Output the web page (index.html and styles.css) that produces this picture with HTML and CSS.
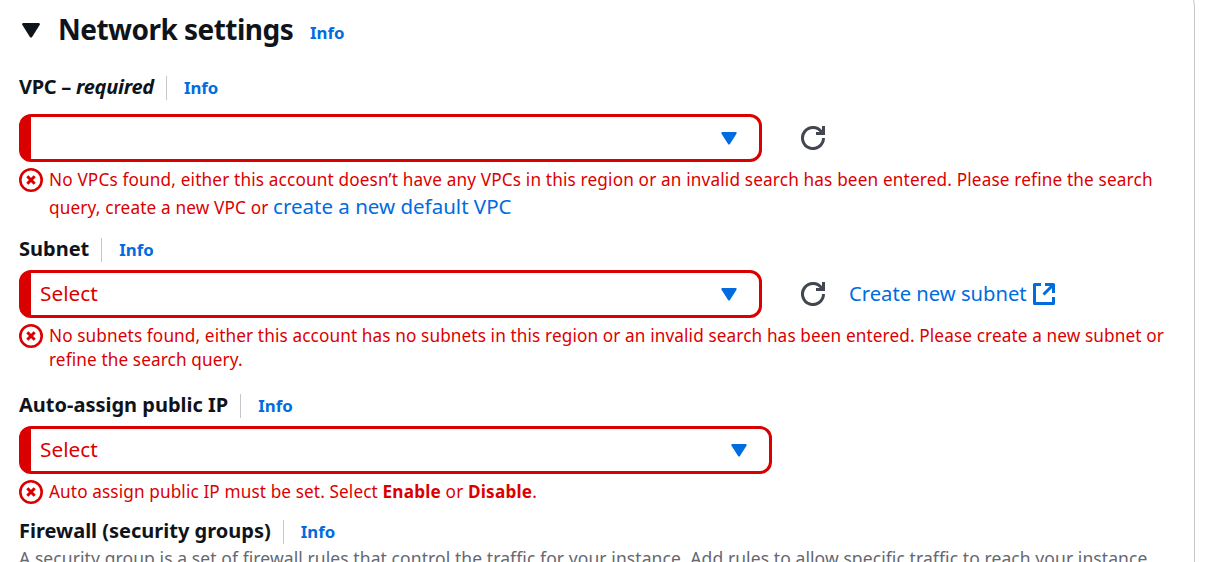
FILE: index.html
```
<!DOCTYPE html>
<html lang="en">
<head>
<meta charset="utf-8">
<title>Network settings</title>
<link rel="stylesheet" href="styles.css">
</head>
<body>
<svg class="sprite" aria-hidden="true">
  <symbol id="caret" viewBox="0 0 18 15"><path d="M1.500 0h15c1.200 0 1.800 1.200 1.100 2.100L10.100 13.900c-.5.8-1.700.8-2.200 0L.4 2.100C-.3 1.200.3 0 1.500 0z"/></symbol>
  <symbol id="error" viewBox="0 0 24 24"><circle cx="12" cy="12" r="10.700" fill="none" stroke="currentColor" stroke-width="2.600"/><path d="M8.300 8.300l7.400 7.400M15.700 8.300l-7.400 7.400" fill="none" stroke="currentColor" stroke-width="3"/></symbol>
  <symbol id="refresh" viewBox="0 0 24 24"><path d="M22.500 12A10.500 10.500 0 1 1 20.600 6L22.500 7.500M22.500 0v7.500H15" fill="none" stroke="currentColor" stroke-width="3"/></symbol>
  <symbol id="external" viewBox="0 0 22 22"><path d="M8 1.500H1.500v19h19V14M12 1.500h8.500V10M20.500 1.500l-10 10" fill="none" stroke="currentColor" stroke-width="3" stroke-linejoin="round"/></symbol>
</svg>
<main class="card">
  <header class="card-header">
    <svg class="toggle"><use href="#caret"/></svg>
    <h2 class="title"><span>Network settings</span></h2>
    <a class="info">Info</a>
  </header>

  <section class="field field-vpc">
    <div class="label-row"><span class="label label-vpc">VPC – <em>required</em></span><a class="info">Info</a></div>
    <div class="control-row">
      <div class="select"><span class="value"></span><svg class="caret"><use href="#caret"/></svg></div>
      <svg class="refresh"><use href="#refresh"/></svg>
    </div>
    <div class="error"><svg class="error-icon"><use href="#error"/></svg>
      <p class="message"><span>No VPCs found, either this account doesn’t have any VPCs in this region or an invalid search has been entered. Please refine the search</span><br><span>query, create a new VPC or</span> <a class="link">create a new default VPC</a></p>
    </div>
  </section>

  <section class="field field-subnet">
    <div class="label-row"><span class="label">Subnet</span><a class="info">Info</a></div>
    <div class="control-row">
      <div class="select"><span class="value">Select</span><svg class="caret"><use href="#caret"/></svg></div>
      <svg class="refresh"><use href="#refresh"/></svg>
      <a class="link create"><span>Create new subnet</span><svg class="external"><use href="#external"/></svg></a>
    </div>
    <div class="error"><svg class="error-icon"><use href="#error"/></svg>
      <p class="message"><span>No subnets found, either this account has no subnets in this region or an invalid search has been entered. Please create a new subnet or</span><br><span>refine the search query.</span></p>
    </div>
  </section>

  <section class="field field-ip">
    <div class="label-row"><span class="label">Auto-assign public IP</span><a class="info">Info</a></div>
    <div class="control-row">
      <div class="select select-wide"><span class="value">Select</span><svg class="caret"><use href="#caret"/></svg></div>
    </div>
    <div class="error"><svg class="error-icon"><use href="#error"/></svg>
      <p class="message"><span>Auto assign public IP must be set. Select <b>Enable</b> or <b>Disable</b>.</span></p>
    </div>
  </section>

  <section class="field field-firewall">
    <div class="label-row"><span class="label">Firewall (security groups)</span><a class="info">Info</a></div>
    <p class="description">A security group is a set of firewall rules that control the traffic for your instance. Add rules to allow specific traffic to reach your instance.</p>
  </section>
</main>
</body>
</html>
```
FILE: styles.css
```
* { box-sizing: border-box; }
body {
  margin: 0;
  height: 562px;
  overflow: hidden;
  background: #fff;
  color: #0f141a;
  font-family: "Noto Sans", "Open Sans", sans-serif;
}
.sprite { position: absolute; width: 0; height: 0; }
svg { display: block; flex: none; }
h2, p { margin: 0; }
.card {
  width: 1215px;
  height: 579px;
  margin: -17px 0 0 -20px;
  padding: 17px 20px 0 38px;
  border: 1px solid #c6c6cd;
  border-bottom: 0;
  border-radius: 24px 24px 0 0;
  white-space: nowrap;
}
.card-header { display: flex; height: 74px; }
.toggle { width: 18px; height: 15px; margin: 22px 18px 0 3px; fill: #0f141a; }
.title { width: 252px; font-size: 28px; line-height: 36px; padding-top: 10px; letter-spacing: -0.530px; }
.info { color: #006ce0; font-size: 16.800px; font-weight: 700; line-height: 24px; }
.card-header .info { padding-top: 20px; }
.label-row { display: flex; height: 24px; align-items: center; }
.label { font-size: 20px; font-weight: 700; line-height: 24px; }
.label-vpc { letter-spacing: -0.280px; }
.label-row .info { margin: 2px 0 0 12px; padding-left: 17px; border-left: 1px solid #c6c6cd; }
.control-row { display: flex; align-items: center; height: 48px; margin-top: 9px; }
.field-vpc .control-row { margin-top: 15px; }
.select {
  display: flex;
  align-items: center;
  justify-content: space-between;
  width: 743px;
  height: 48px;
  padding: 0 22px 0 9px;
  border: 3px solid #db0000;
  border-left-width: 12px;
  border-radius: 12px;
}
.select-wide { width: 753px; }
.value { color: #db0000; font-size: 20.800px; line-height: 28px; margin-bottom: 2px; }
.caret { width: 16px; height: 13px; fill: #006ce0; }
.refresh { width: 24px; height: 24px; margin-left: 39px; color: #424650; }
.link { color: #006ce0; font-size: 20.500px; letter-spacing: 0; }
.create { display: flex; align-items: center; margin-left: 24px; line-height: 28px; font-size: 20.200px; }
.create span { margin-top: -3px; }
.external { width: 22px; height: 22px; margin-left: 6px; }
.error { display: flex; gap: 6px; margin-top: 6px; color: #db0000; }
.error-icon { width: 24px; height: 24px; }
.message { font-size: 17.200px; line-height: 24px; letter-spacing: 0.115px; }
.field-vpc .message { letter-spacing: 0.155px; }
.field-vpc .message .link { line-height: 28px; letter-spacing: 0; }
.field-ip b { letter-spacing: 0.200px; }
.field-vpc { height: 162px; }
.field-subnet { height: 156px; }
.field-ip { height: 126px; }
.description { color: #656871; font-size: 17.500px; line-height: 24px; margin-top: 3px; letter-spacing: 0.085px; }
```
